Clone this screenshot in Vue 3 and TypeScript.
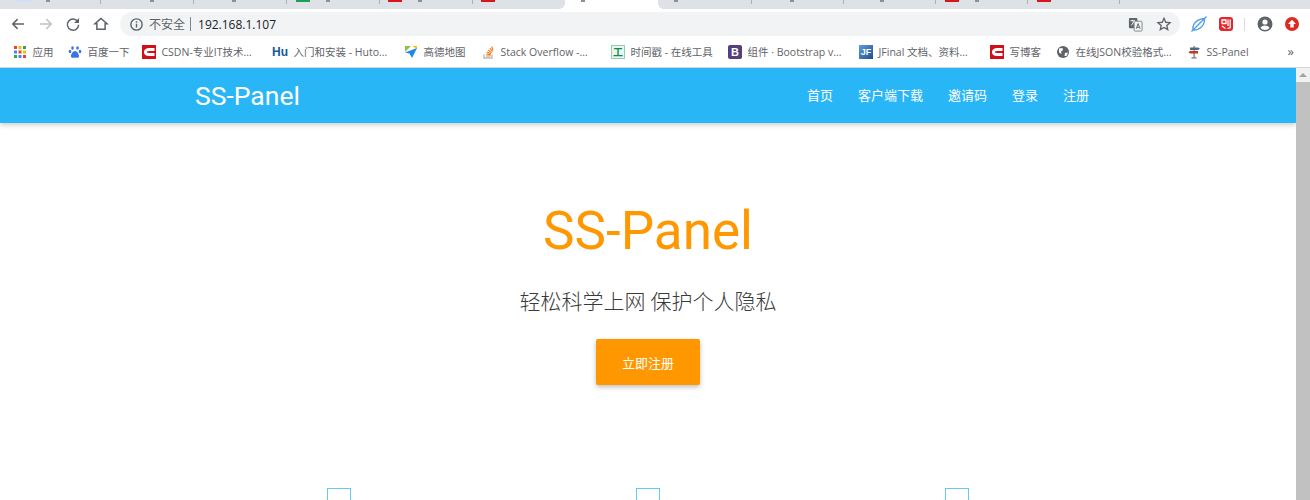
<template>
  <div class="window">
    <div class="tabstrip">
      <div class="tab-active"></div>
      <span v-for="x in tabSeps" :key="x" class="tab-sep" :style="{ left: x + 'px' }"></span>
      <span
        v-for="fav in tabFavs"
        :key="fav.left"
        class="tab-fav"
        :style="{ left: fav.left + 'px', background: fav.color }"
      ></span>
      <span v-for="x in tabInks" :key="x" class="tab-ink" :style="{ left: x + 'px' }"></span>
    </div>

    <div class="toolbar">
      <div class="nav-icons">
        <svg class="tool" viewBox="0 0 24 24"><path d="M20 12H5M11.500 5.500 5 12l6.500 6.500" /></svg>
        <svg class="tool off" viewBox="0 0 24 24"><path d="M4 12h15M12.500 5.500 19 12l-6.500 6.500" /></svg>
        <svg class="tool" viewBox="0 0 24 24"><path d="M18.500 9A7.500 7.500 0 1 0 19.500 13" /><path class="solid" d="M20 4v6.500h-6.500z" /></svg>
        <svg class="tool" viewBox="0 0 24 24"><path d="M12 4.500 4 11.500h2.500V19h11v-7.500H20z" /></svg>
      </div>
      <div class="omnibox">
        <svg class="info" viewBox="0 0 16 16">
          <circle cx="8" cy="8" r="6" />
          <path d="M8 7.200v4M8 4.500v1.500" />
        </svg>
        <span class="insecure">不安全</span>
        <span class="pipe"></span>
        <span class="url">192.168.1.107</span>
        <span class="omni-space"></span>
        <svg class="translate" viewBox="0 0 16 16">
          <rect x="1" y="1" width="9" height="11" rx="1" fill="#5f6368" />
          <rect x="6.500" y="4.500" width="8.500" height="10.500" rx="1" fill="#f1f3f4" stroke="#80868b" />
          <path d="M2.500 4h5M5 3v1.500M3.500 9 6.500 4.500" stroke="#fff" fill="none" />
          <path d="M8.800 12.500 10.800 7l2 5.500M9.500 11h2.600" stroke="#5f6368" fill="none" />
        </svg>
        <svg class="star" viewBox="0 0 24 24">
          <path d="M12 3.500 14.600 9.400 21 10l-4.800 4.200 1.400 6.300L12 17.200l-5.600 3.300 1.400-6.300L3 10l6.400-.6z" />
        </svg>
      </div>
      <div class="ext-icons">
        <svg class="ext leaf" viewBox="0 0 18 18">
          <path d="M3 15C2 9 7 4 14.500 3.500 15 10 10 15.500 3 15zM1.500 16.500 16.500 1.500" />
        </svg>
        <span class="ext-red">
          <svg viewBox="0 0 14 14"><path d="M3 3h4v3.500H3zM9 2.500V9M11.200 2.500v8.200L8.500 11.500M3 9l3.500 2.500" /></svg>
        </span>
        <span class="ext-sep"></span>
        <svg class="ext" viewBox="0 0 18 18">
          <circle cx="9" cy="9" r="7.500" fill="#5f6368" />
          <circle cx="9" cy="7" r="2.600" fill="#fff" />
          <path d="M4.500 13c1-2 3-2.600 4.500-2.600s3.500.6 4.500 2.600C12.500 14.300 11 15 9 15s-3.500-.7-4.500-2z" fill="#fff" />
        </svg>
        <svg class="ext" viewBox="0 0 18 18">
          <circle cx="9" cy="9" r="7" fill="#e0281e" />
          <path d="M9 4.800 13 9h-2.300v3.500H7.300V9H5z" fill="#fff" />
        </svg>
      </div>
    </div>

    <div class="bookmarks">
      <div v-for="mark in bookmarks" :key="mark.label" class="mark" :style="{ width: mark.width + 'px' }">
        <svg v-if="mark.icon === 'apps'" class="fav" viewBox="0 0 14 14">
          <rect v-for="dot in appDots" :key="dot.key" :x="dot.x" :y="dot.y" width="3" height="3" :fill="dot.fill" />
        </svg>
        <svg v-else-if="mark.icon === 'paw'" class="fav" viewBox="0 0 14 14">
          <g fill="#3a72e8">
            <ellipse cx="4.500" cy="3" rx="1.300" ry="1.800" />
            <ellipse cx="9.500" cy="3" rx="1.300" ry="1.800" />
            <ellipse cx="2" cy="6.500" rx="1.300" ry="1.700" />
            <ellipse cx="12" cy="6.500" rx="1.300" ry="1.700" />
            <path d="M7 6c2 0 4 3 4 5.200 0 2-2.500 1.800-4 1.300-1.500.5-4 .7-4-1.300C3 9 5 6 7 6z" />
          </g>
        </svg>
        <svg v-else-if="mark.icon === 'csdn'" class="fav" viewBox="0 0 14 14">
          <rect width="14" height="14" fill="#cf1018" />
          <path d="M12.500 4.500H7.200C4.900 4.500 3.300 5.600 3.300 7s1.600 2.500 3.900 2.500h5.300" fill="none" stroke="#fff" stroke-width="2.800" />
        </svg>
        <span v-else-if="mark.icon === 'hu'" class="fav hu">Hu</span>
        <svg v-else-if="mark.icon === 'map'" class="fav" viewBox="0 0 14 14">
          <path d="M1 1h6L1 7z" fill="#8bc34a" />
          <path d="M8 1h5v3z" fill="#ffc107" />
          <path d="M13 3 1 7.500l4.500 1L8 13z" fill="#1e88e5" />
        </svg>
        <svg v-else-if="mark.icon === 'so'" class="fav" viewBox="0 0 14 14">
          <path d="M3 9.500v3.500h8V9.500" fill="none" stroke="#bcbbbb" stroke-width="1.400" />
          <path d="M5 11h4.500M5.200 9l4.400.8M5.800 7l4.100 1.900M7 4.900l3.500 2.800M8.800 3l2.600 3.600M10.800 1.500l1.200 4" fill="none" stroke="#f48024" stroke-width="1.200" />
        </svg>
        <span v-else-if="mark.icon === 'stamp'" class="fav stamp">工</span>
        <span v-else-if="mark.icon === 'bs'" class="fav bs">B</span>
        <span v-else-if="mark.icon === 'jf'" class="fav jf">JF</span>
        <svg v-else-if="mark.icon === 'globe'" class="fav" viewBox="0 0 14 14">
          <circle cx="7" cy="7" r="6" fill="#5f6368" />
          <path d="M3 3.500 6.500 3 7 5 5 6.500 5.500 9 3 7.500zM9 8l3-.5-1.500 3.500L8.500 11z" fill="#fff" />
        </svg>
        <svg v-else class="fav" viewBox="0 0 14 14">
          <path d="M6.500 1h1.200v11h-1.200z" fill="#8a6d3b" />
          <path d="M3 2.500h8l2 1.200-2 1.300H3z" fill="#4a6a8a" />
          <path d="M11 6H3L1.500 7.200 3 8.500h8z" fill="#c0392b" />
          <path d="M4.500 12.300h5v1.200h-5z" fill="#666" />
        </svg>
        <span class="mark-label">{{ mark.label }}</span>
      </div>
      <span class="more">»</span>
    </div>

    <div class="viewport">
      <div class="page">
        <header class="navbar">
          <a class="brand">SS-Panel</a>
          <nav class="menu">
            <a v-for="item in menu" :key="item">{{ item }}</a>
          </nav>
        </header>

        <main class="hero">
          <h1>SS-Panel</h1>
          <h5>轻松科学上网 保护个人隐私</h5>
          <button type="button" class="cta">立即注册</button>
        </main>

        <section class="features">
          <div v-for="n in 3" :key="n" class="feature">
            <span class="glyph"></span>
          </div>
        </section>
      </div>

      <div class="scrollbar">
        <div class="scroll-btn"><span class="arrow"></span></div>
        <div class="scroll-thumb"></div>
      </div>
    </div>
  </div>
</template>

<script setup lang="ts">
interface Bookmark {
  label: string
  icon: string
  width: number
}

const tabSeps = [100, 193, 286, 379, 472, 751, 843, 935, 1027, 1119]
const tabInks = [46, 150, 232, 326, 418, 581, 674, 790, 880, 975]
const tabFavs = [
  { left: 17, color: '#cfdffa' },
  { left: 296, color: '#1e9e57' },
  { left: 388, color: '#d8141c' },
  { left: 481, color: '#d8141c' },
  { left: 945, color: '#d8141c' },
  { left: 1037, color: '#d8141c' },
]

const bookmarks: Bookmark[] = [
  { label: '应用', icon: 'apps', width: 55 },
  { label: '百度一下', icon: 'paw', width: 74 },
  { label: 'CSDN-专业IT技术...', icon: 'csdn', width: 130 },
  { label: '入门和安装 - Huto...', icon: 'hu', width: 132 },
  { label: '高德地图', icon: 'map', width: 77 },
  { label: 'Stack Overflow -...', icon: 'so', width: 130 },
  { label: '时间戳 - 在线工具', icon: 'stamp', width: 117 },
  { label: '组件 · Bootstrap v...', icon: 'bs', width: 131 },
  { label: 'JFinal 文档、资料...', icon: 'jf', width: 131 },
  { label: '写博客', icon: 'csdn', width: 66 },
  { label: '在线JSON校验格式...', icon: 'globe', width: 131 },
  { label: 'SS-Panel', icon: 'post', width: 80 },
]

const appColors = ['#ea4335', '#fbbc05', '#34a853', '#4285f4', '#ea4335', '#fbbc05', '#34a853', '#4285f4', '#ea4335']
const appDots = appColors.map((fill, i) => ({
  key: i,
  fill,
  x: 1 + (i % 3) * 4.5,
  y: 1 + Math.floor(i / 3) * 4.5,
}))

const menu = ['首页', '客户端下载', '邀请码', '登录', '注册']
</script>

<style>
html,
body {
  margin: 0;
  overflow: hidden;
  background: #fff;
}
</style>

<style scoped>
.window {
  width: 1310px;
  height: 500px;
  display: flex;
  flex-direction: column;
  overflow: hidden;
  font-family: Roboto, "Noto Sans CJK SC", sans-serif;
}

/* browser chrome */
.tabstrip {
  position: relative;
  height: 9px;
  background: #dee1e6;
  flex: none;
}

.tab-sep {
  position: absolute;
  top: 0;
  height: 4px;
  width: 1px;
  background: #aeb1b6;
}

.tab-fav {
  position: absolute;
  top: 0;
  width: 14px;
  height: 2px;
}

.tab-ink {
  position: absolute;
  top: 0;
  width: 4px;
  height: 2px;
  background: #8f9094;
}

.tab-active {
  position: absolute;
  left: 565px;
  width: 93px;
  top: 0;
  bottom: 0;
  background: #fff;
}

.tab-active::before,
.tab-active::after {
  content: "";
  position: absolute;
  bottom: 0;
  width: 6px;
  height: 6px;
}

.tab-active::before {
  left: -6px;
  background: radial-gradient(circle at 0 0, transparent 6px, #fff 6px);
}

.tab-active::after {
  right: -6px;
  background: radial-gradient(circle at 100% 0, transparent 6px, #fff 6px);
}

.toolbar {
  height: 27px;
  flex: none;
  display: flex;
  align-items: flex-end;
  background: #fff;
}

.nav-icons {
  display: flex;
  width: 120px;
  height: 24px;
  padding-left: 9px;
  box-sizing: border-box;
  align-items: center;
  gap: 9.500px;
}

.tool {
  width: 18px;
  height: 18px;
  fill: none;
  stroke: #5f6368;
  stroke-width: 2;
}

.tool.off {
  stroke: #bdc1c6;
}

.tool .solid {
  fill: #5f6368;
  stroke: none;
}

.omnibox {
  width: 1060px;
  height: 24px;
  box-sizing: border-box;
  display: flex;
  align-items: center;
  padding: 0 8px 0 9px;
  background: #f1f3f4;
  border-radius: 12px;
  font-family: "Open Sans", "Noto Sans CJK SC", sans-serif;
}

.info {
  width: 15px;
  height: 15px;
  fill: none;
  stroke: #5f6368;
  stroke-width: 1.500;
}

.insecure {
  margin-left: 5px;
  font-size: 12px;
  color: #5f6368;
}

.pipe {
  width: 1px;
  height: 14px;
  margin: 0 7px 0 5px;
  background: #80868b;
}

.url {
  font-size: 12px;
  color: #202124;
}

.omni-space {
  flex: 1;
}

.translate {
  width: 15px;
  height: 15px;
  margin-right: 13px;
}

.star {
  width: 16px;
  height: 16px;
  fill: none;
  stroke: #5f6368;
  stroke-width: 2;
}

.ext-icons {
  flex: 1;
  height: 24px;
  display: flex;
  align-items: center;
  padding-left: 10px;
}

.ext {
  width: 18px;
  height: 18px;
  flex: none;
}

.leaf {
  fill: none;
  stroke: #4a9cf0;
  stroke-width: 1.300;
}

.ext-red {
  width: 14px;
  height: 14px;
  margin-left: 11px;
  background: #e5262a;
  border-radius: 3px;
  flex: none;
}

.ext-red svg {
  display: block;
  fill: none;
  stroke: #fff;
  stroke-width: 1.300;
}

.ext-sep {
  width: 1px;
  height: 13px;
  margin: 0 11px;
  background: #dadce0;
  flex: none;
}

.ext-sep + .ext {
  margin-right: 9px;
}

.bookmarks {
  height: 31px;
  flex: none;
  display: flex;
  align-items: center;
  padding: 0 0 0 13px;
  background: #fff;
  position: relative;
  font-family: "Open Sans", "Noto Sans CJK SC", sans-serif;
}

.mark {
  display: flex;
  align-items: center;
  gap: 5.500px;
  flex: none;
  white-space: nowrap;
  overflow: hidden;
}

.fav {
  width: 14px;
  height: 14px;
  flex: none;
}

.mark-label {
  font-size: 10.500px;
  color: #5f6368;
}

.hu {
  width: 16px;
  color: #155a9c;
  font: 700 12px/14px "Liberation Sans", sans-serif;
}

.stamp {
  box-sizing: border-box;
  border: 1px solid #8fd0b0;
  background: #e8f6ef;
  color: #16894f;
  font: 700 10px/12px "Noto Sans CJK SC", sans-serif;
  text-align: center;
}

.bs {
  background: #563d7c;
  border-radius: 2px;
  color: #fff;
  font: 700 11px/14px "Liberation Sans", sans-serif;
  text-align: center;
}

.jf {
  background: linear-gradient(135deg, #5f9fd8, #1c4f8f);
  color: #fff;
  font: 700 9px/14px "Liberation Sans", sans-serif;
  text-align: center;
}

.more {
  position: absolute;
  right: 16px;
  top: 6px;
  font-size: 13px;
  color: #5f6368;
}

/* page */
.viewport {
  flex: 1;
  min-height: 0;
  display: flex;
  border-top: 1px solid #d4d4d4;
}

.page {
  flex: 1;
  min-width: 0;
  overflow: hidden;
}

.navbar {
  height: 55px;
  display: flex;
  align-items: center;
  justify-content: space-between;
  padding: 0 207px 0 195px;
  background: #29b6f6;
  box-shadow: 0 2px 5px rgba(0, 0, 0, 0.2);
  color: #fff;
}

.brand {
  font-size: 26.500px;
}

.menu {
  display: flex;
  gap: 25px;
  margin-bottom: 3px;
  font-size: 13px;
}

.hero {
  display: flex;
  flex-direction: column;
  align-items: center;
  padding-top: 73px;
}

.hero h1 {
  margin: 0;
  font-size: 53px;
  font-weight: 400;
  line-height: 70px;
  color: #ff9800;
}

.hero h5 {
  margin: 21px 0 0;
  font-size: 21px;
  font-weight: 300;
  line-height: 30px;
  color: #3a3a3a;
}

.cta {
  margin-top: 22px;
  width: 104px;
  height: 46px;
  border: 0;
  border-radius: 2px;
  background: #ff9800;
  box-shadow: 0 2px 5px rgba(0, 0, 0, 0.26);
  color: #fff;
  font-family: inherit;
  font-size: 13px;
}

.features {
  display: flex;
  justify-content: center;
  gap: 285px;
  margin-top: 103px;
}

.glyph {
  display: block;
  width: 22px;
  height: 30px;
  border: 1px solid #64c8f8;
}

.scrollbar {
  width: 14px;
  flex: none;
  display: flex;
  flex-direction: column;
  background: #f1f1f1;
}

.scroll-btn {
  height: 14px;
  display: flex;
  align-items: center;
  justify-content: center;
}

.arrow {
  width: 0;
  height: 0;
  border: 4px solid transparent;
  border-top: 0;
  border-bottom: 4px solid #a3a3a3;
}

.scroll-thumb {
  flex: 1;
  background: #c1c1c1;
}
</style>
